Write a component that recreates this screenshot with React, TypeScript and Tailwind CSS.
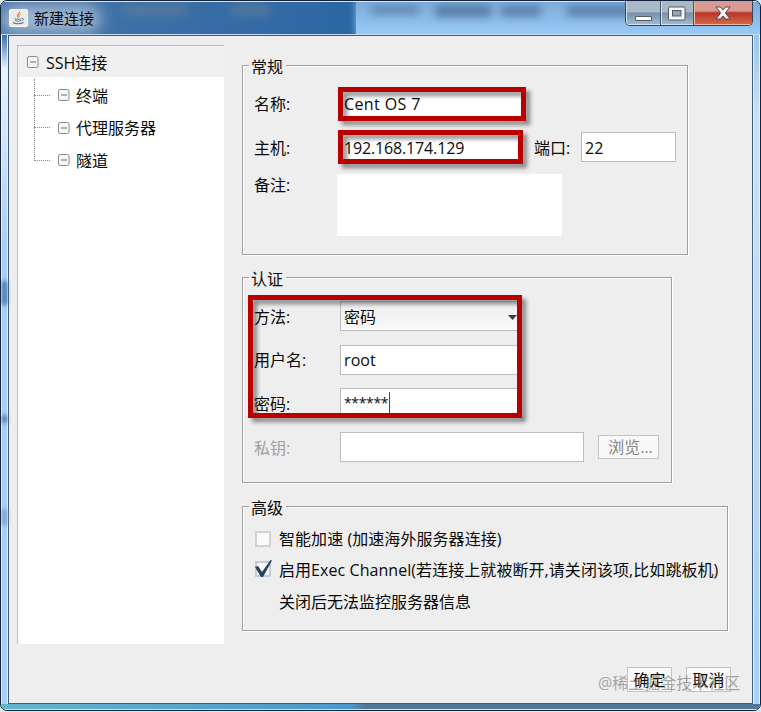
import React from 'react';

const treeItems = ['终端', '代理服务器', '隧道'];

const TreeToggle: React.FC = () => (
  <svg width="12" height="12" viewBox="0 0 12 12" className="shrink-0">
    <rect x="0.5" y="0.5" width="10.5" height="11" rx="1.5" fill="#f6f6f6" stroke="#8c8c8c" />
    <path d="M3 6h6" stroke="#6e6e6e" />
  </svg>
);

const JavaIcon: React.FC = () => (
  <svg width="19" height="18" viewBox="0 0 19 18" className="shrink-0">
    <rect x="0.5" y="0.5" width="18" height="17" rx="1.5" fill="#ecebe8" stroke="#fafafa" />
    <path d="M10.3 2.5c1.2 1.6-2.8 2.7-1.7 4.5.4.7.9 1 .7 1.9" fill="none" stroke="#e98b2d" strokeWidth="1.4" />
    <path d="M11.8 5c-2 1-1.9 1.7-1.3 2.7" fill="none" stroke="#e98b2d" />
    <path d="M5.5 9.7c2 .7 5 .7 7 0M6 11.5c2 .8 4.5.7 6 0M13 9.5c2.5-.4 1.7 2-.4 2.4" fill="none" stroke="#5d7f9c" />
    <path d="M4 13.5c2 1.7 8.5 1.6 10.5.1" fill="none" stroke="#5d7f9c" strokeWidth="1.2" />
  </svg>
);

const WindowButtons: React.FC = () => (
  <div className="flex h-[25px] w-[128px] overflow-hidden rounded-b-[5px] border border-t-0 border-[#34465c]">
    <div className="flex w-[35px] items-end justify-center border-r border-[#43566f] bg-linear-to-b from-[#aab9c8] from-45% via-[#7890a8] via-50% to-[#a3bdd6] pb-1 shadow-[inset_1px_-1px_0_#d3e0ec]">
      <div className="h-[5px] w-[17px] rounded-[1px] border border-[#515b68] bg-white"></div>
    </div>
    <div className="flex w-[33px] items-center justify-center border-r border-[#43566f] bg-linear-to-b from-[#aab9c8] from-45% via-[#7890a8] via-50% to-[#a3bdd6] shadow-[inset_1px_-1px_0_#d3e0ec]">
      <svg width="18" height="15" viewBox="0 0 18 15">
        <rect x="0.5" y="1" width="16.5" height="13" rx="1" fill="#f8f8f8" stroke="#515b68" />
        <rect x="4.5" y="4.5" width="8.5" height="5.5" fill="#91a4b8" stroke="#515b68" />
      </svg>
    </div>
    <div className="flex flex-1 items-center justify-center bg-linear-to-b from-[#d99a91] from-40% via-[#b93425] via-50% to-[#d56a4b] shadow-[inset_1px_-1px_0_#edb6a7]">
      <svg width="16" height="14" viewBox="0 0 16 14">
        <path
          d="M1 1h4.5L8 4l2.5-3H15l-4.6 6 4.6 6h-4.5L8 10l-2.5 3H1l4.6-6z"
          fill="#f7f7f7"
          stroke="#5e4248"
          strokeLinejoin="round"
        />
      </svg>
    </div>
  </div>
);

type GroupProps = {
  title: string;
  className: string;
  children: React.ReactNode;
};

const Group: React.FC<GroupProps> = ({ title, className, children }) => (
  <fieldset
    className={`relative border border-[#a0a0a0] shadow-[1px_1px_0_#fff,inset_1px_1px_0_#fff] ${className}`}
  >
    <legend className="ml-1.5 h-[19px] bg-[#eee] pt-[3px] pr-[3px] pl-0.5 leading-4">{title}</legend>
    {children}
  </fieldset>
);

// red marker frame drawn over the form
const Marker: React.FC<{ className: string }> = ({ className }) => (
  <div
    className={`pointer-events-none absolute border-5 border-[#b90000] drop-shadow-[4px_4px_2px_rgba(0,0,0,0.45)] ${className}`}
  ></div>
);

const App: React.FC = () => {
  return (
    <div className="h-[712px] w-[761px] overflow-hidden bg-[#dfe6ee] font-['Open_Sans','Noto_Sans_CJK_SC',sans-serif] text-[16px] leading-5 text-[#0a0a0a]">
      <div className="flex h-[711px] w-[761px] flex-col overflow-hidden rounded-[7px] border border-[#14233a] bg-[#a9cdf3] shadow-[inset_0_0_0_1px_#e3f2ff]">
        <div className="relative flex h-[34px] shrink-0 justify-between overflow-hidden bg-linear-to-r from-[#4775a5] from-0% via-[#2c67a5] via-45% to-[#2c67a5] to-100% px-2">
          <div className="absolute top-0 right-0 h-full w-[404px] bg-linear-to-b from-[#7caad8] to-[#9acbf7] shadow-[0_0_7px_#8bbbe8]"></div>
          <div className="absolute top-[3px] left-[122px] h-3 w-16 bg-[#60809c]/60 blur-[4px]"></div>
          <div className="absolute top-[3px] left-[230px] h-3 w-10 bg-[#60809c]/60 blur-[4px]"></div>
          <div className="absolute top-[5px] left-[370px] h-2 w-12 bg-[#4b7199]/70 blur-[4px]"></div>
          <div className="absolute top-[4px] left-[434px] h-3 w-14 bg-[#41658f]/70 blur-[4px]"></div>
          <div className="absolute top-[5px] left-[500px] h-2.5 w-10 bg-[#41658f]/70 blur-[4px]"></div>
          <div className="absolute top-[5px] left-[566px] h-2.5 w-16 bg-[#41658f]/70 blur-[4px]"></div>
          <div className="absolute top-1 left-0 h-7 w-[100px] rounded-full bg-[#c0cfdf]/75 blur-[8px]"></div>
          <div className="absolute inset-x-0 top-0 h-px bg-[#d5e7f6]"></div>
          <div className="absolute inset-x-0 bottom-0 h-px bg-[#c5dcf0]"></div>
          <div className="relative flex items-center gap-1.5 text-[15px]">
            <JavaIcon />
            <span className="pb-px">新建连接</span>
          </div>
          <div className="relative -mr-px">
            <WindowButtons />
          </div>
        </div>

        <div className="flex h-[669px] shrink-0">
          <div className="w-[7px] shrink-0 border-x border-[#e3f2ff] bg-linear-to-b from-[#3d70a8] via-[#eaf3fc] via-5% to-[#a9cdf3] to-32%">
            <div className="mt-[246px] h-6 bg-[#3e70a9] blur-[2px]"></div>
            <div className="mt-[110px] h-2 bg-[#55779f] blur-[2px]"></div>
            <div className="mt-[86px] h-4 bg-[#7b9cc9] blur-[2px]"></div>
          </div>

          <div className="flex w-[745px] shrink-0 border border-[#405c7c] bg-[#eee]">
            <div className="mt-[9px] ml-2 h-[599px] w-[207px] shrink-0 border-t border-l border-[#bdbdbd] bg-white">
              <div className="flex h-[31px] items-center gap-1.5 bg-[#f0f0f0] pl-[9px]">
                <TreeToggle />
                <span className="pt-0.5 pl-px">SSH连接</span>
              </div>
              <div className="relative pt-[2px] pl-[16px]">
                <div className="absolute top-[2px] left-[16px] h-[82px] border-l border-dotted border-[#8a8a8a]"></div>
                {treeItems.map((item) => (
                  <div key={item} className="flex h-[32.5px] items-center">
                    <div className="w-4 border-t border-dotted border-[#8a8a8a]"></div>
                    <div className="ml-2 flex items-center gap-1.5">
                      <TreeToggle />
                      <span className="pt-px">{item}</span>
                    </div>
                  </div>
                ))}
              </div>
            </div>

            <div className="flex w-[528px] flex-col pt-5 pl-[18px]">
              <Group title="常规" className="h-[199px] w-[446px]">
                <div className="flex flex-col pl-[11px]">
                  <div className="mt-[14px] flex h-[30px] items-center">
                    <span className="w-[86px]">名称:</span>
                    <div className="flex h-[30px] w-[184px] items-center border border-[#bcbcbc] bg-white pl-[3px] tracking-[0.4px]">
                      Cent OS 7
                    </div>
                  </div>
                  <div className="mt-[13px] flex h-[30px] items-center">
                    <span className="w-[86px] pt-0.5">主机:</span>
                    <div className="flex h-[30px] w-[181px] items-center border border-[#bcbcbc] bg-white pt-px pl-[3px] tracking-[-0.15px]">
                      192.168.174.129
                    </div>
                    <span className="ml-[13px] w-[47px] pt-0.5">端口:</span>
                    <div className="flex h-[30px] w-[95px] items-center border border-[#bcbcbc] bg-white pt-px pl-[3px]">22</div>
                  </div>
                  <div className="mt-3 flex">
                    <span className="mt-px w-[83px]">备注:</span>
                    <div className="h-[62px] w-[225px] rounded-[1px] bg-white"></div>
                  </div>
                </div>
                <Marker className="top-3 left-[95px] h-[34px] w-[188px]" />
                <Marker className="top-[55px] left-[95px] h-[34px] w-[185px]" />
              </Group>

              <Group title="认证" className="mt-[13px] h-[215px] w-[430px]">
                <div className="flex flex-col pl-[11px]">
                  <div className="mt-[14px] flex h-[30px] items-center">
                    <span className="w-[86px] pt-0.5">方法:</span>
                    <div className="flex h-[30px] w-[180px] items-center justify-between border border-[#bcbcbc] bg-linear-to-b from-[#ededed] to-[#fafafa] pr-0.5 pl-[3px]">
                      <span className="pt-0.5">密码</span>
                      <svg width="9" height="5" viewBox="0 0 9 5" className="mt-0.5">
                        <path d="M0 0h9L4.5 5z" fill="#3c3c3c" />
                      </svg>
                    </div>
                  </div>
                  <div className="mt-[14px] flex h-[30px] items-center">
                    <span className="w-[86px]">用户名:</span>
                    <div className="flex h-[30px] w-[180px] items-center border border-[#bcbcbc] bg-white pl-[3px] tracking-[0.1px]">root</div>
                  </div>
                  <div className="mt-[13px] flex h-[30px] items-center">
                    <span className="w-[86px] pt-0.5">密码:</span>
                    <div className="flex h-[30px] w-[180px] items-center border border-[#bcbcbc] bg-white pl-[3px]">
                      <span className="text-[14px] tracking-[-0.35px]">******</span>
                      <div className="ml-px h-6 w-px translate-y-px bg-[#444]"></div>
                    </div>
                  </div>
                  <div className="mt-[14px] flex h-[30px] items-center text-[#a0a0a0]">
                    <span className="w-[86px] pt-0.5">私钥:</span>
                    <div className="h-[30px] w-[244px] border border-[#bcbcbc] bg-white"></div>
                    <div className="ml-[14px] flex h-6 w-[61px] items-center justify-center border border-[#c4c4c4] bg-[#f8f8f8] pl-1 text-[#858585]">
                      浏览...
                    </div>
                  </div>
                </div>
                <Marker className="top-2 left-[5px] h-[123px] w-[274px]" />
              </Group>

              <Group title="高级" className="mt-[14px] h-[134px] w-[486px]">
                <div className="flex flex-col pl-3">
                  <div className="mt-[13px] flex h-5 items-center">
                    <div className="h-4 w-4 border-2 border-[#d2d2d2] bg-[#fafafa]"></div>
                    <span className="ml-2 tracking-[0.06px] whitespace-nowrap">智能加速 (加速海外服务器连接)</span>
                  </div>
                  <div className="mt-[11px] flex h-5 items-center">
                    <svg width="18" height="18" viewBox="0 0 18 18" className="-mt-0.5 shrink-0">
                      <rect x="1" y="2" width="14" height="14" fill="#f5f7fa" stroke="#c2ccd6" strokeWidth="2" />
                      <path d="M0 7l3-1 4 6L15.5 0 17 .5 8 17H6z" fill="#29415b" />
                    </svg>
                    <span className="ml-1.5 tracking-[0.06px] whitespace-nowrap">
                      启用Exec Channel(若连接上就被断开,请关闭该项,比如跳板机)
                    </span>
                  </div>
                  <div className="mt-3 pl-6">关闭后无法监控服务器信息</div>
                </div>
              </Group>

              <div className="relative mt-9 flex gap-[14px] pl-[385px]">
                <div className="flex h-[25px] w-[45px] items-center justify-center border border-[#c4c4c4] bg-[#f8f8f8]">确定</div>
                <div className="flex h-[25px] w-[45px] items-center justify-center border border-[#c4c4c4] bg-[#f8f8f8]">取消</div>
                <div className="absolute top-[6px] left-[356px] whitespace-nowrap text-[#707070]/60">@稀土掘金技术社区</div>
              </div>
            </div>
          </div>

          <div className="w-[7px] shrink-0 border-x border-[#e3f2ff] bg-linear-to-b from-[#9ac5ef] via-[#c8e1f8] via-12% to-[#a9d0f8] to-95%"></div>
        </div>

        <div className="flex-1 border-b border-[#c5e4fa] bg-linear-to-r from-[#60b7cc] from-0% via-[#4a98cb] via-46% to-[#4f7696] to-48%"></div>
      </div>
    </div>
  );
};

export default App;
